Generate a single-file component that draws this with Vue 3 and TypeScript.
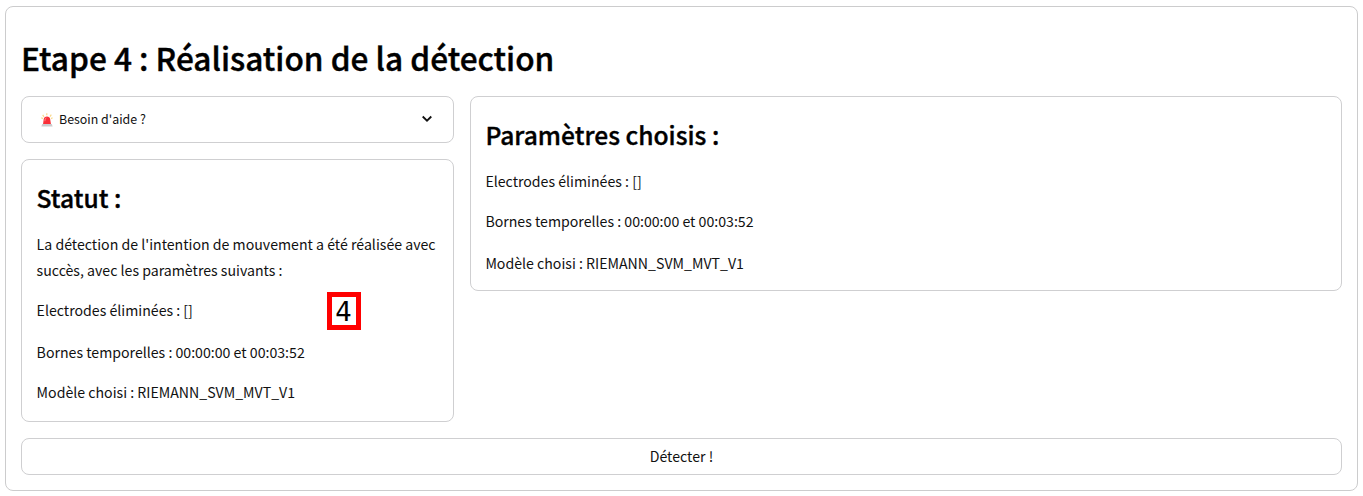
<script setup lang="ts">
const parameters: string[] = [
  'Electrodes éliminées : []',
  'Bornes temporelles : 00:00:00 et 00:03:52',
  'Modèle choisi : RIEMANN_SVM_MVT_V1',
]
</script>

<template>
  <main class="step">
    <h1>Etape 4 : Réalisation de la détection</h1>
    <div class="columns">
      <div class="left">
        <section class="card help">
          <svg class="siren" viewBox="0 0 12 14" aria-hidden="true">
            <path d="M1.7 1.8 3 3.8M5.8.2v2M10.3 1.7 9 3.6M.3 4.8l1.6.8M11.6 4.8l-1.6.8" stroke="#f9d98c" stroke-width="1.2" />
            <path d="M2 11.4 2.7 6.2C2.9 4.4 4.2 3.6 6 3.6s3 .8 3.2 2.6l.8 5.2z" fill="#f92f38" />
            <path d="M3.9 8.2 4.2 6c.1-.7.5-1 1.2-1.1" stroke="#ff8c88" stroke-width=".9" fill="none" />
            <path d="M1.2 11h9.6l.9 2.4H.3z" fill="#cbcbce" />
          </svg>
          <span>Besoin d'aide ?</span>
          <svg class="chevron" viewBox="0 0 12 8" aria-hidden="true">
            <path d="M1.7 1.5 6 5.7l4.3-4.2" fill="none" stroke="#111" stroke-width="1.8" />
          </svg>
        </section>
        <section class="card status">
          <h2>Statut :</h2>
          <p class="summary">La détection de l'intention de mouvement a été réalisée avec<br />succès, avec les paramètres suivants :</p>
          <p v-for="line in parameters" :key="line">{{ line }}</p>
          <span class="marker">4</span>
        </section>
      </div>
      <section class="card chosen">
        <h2>Paramètres choisis :</h2>
        <p v-for="line in parameters" :key="line">{{ line }}</p>
      </section>
    </div>
    <button type="button">Détecter !</button>
  </main>
</template>

<style>
body {
  background: #fff;
}
</style>

<style scoped>
* {
  box-sizing: border-box;
}
.step {
  width: 1353px;
  height: 485px;
  margin: 6px 0 0 5px;
  padding: 0 15px;
  border: 1px solid #cccccd;
  border-radius: 8px;
  color: #111;
  font-family: "Noto Sans CJK JP", "Noto Sans", sans-serif;
  font-size: 14.15px;
  display: flow-root;
}
h1 {
  margin: 27px 0 0;
  height: 62px;
  line-height: 46px;
  font-size: 31.6px;
  font-weight: 500;
  -webkit-text-stroke: 0.4px #000;
  color: #000;
  white-space: nowrap;
}
.columns {
  display: flex;
  align-items: flex-start;
  gap: 16px;
}
.left {
  width: 433px;
  flex: none;
}
.card {
  border: 1px solid #cfcfd1;
  border-radius: 8px;
}
.help {
  height: 47px;
  display: flex;
  align-items: center;
  padding: 0 20px 1px 19px;
  font-size: 12.4px;
}
.siren {
  width: 12px;
  height: 14px;
  margin: 1px 6px 0 0;
}
.chevron {
  width: 12px;
  height: 8px;
  margin-left: auto;
}
.status {
  position: relative;
  height: 263px;
  margin-top: 16px;
  padding: 18px 14.6px 0;
}
.chosen {
  flex: 1;
  height: 195px;
  margin-bottom: 1px;
  padding: 18px 14.4px 0;
}
h2 {
  margin: 0 0 15px;
  line-height: 38px;
  font-size: 24.6px;
  font-weight: 500;
  -webkit-text-stroke: 0.35px #000;
  color: #000;
}
p {
  margin: 0 0 15px;
  line-height: 26px;
  white-space: nowrap;
}
.summary {
  margin-bottom: 14px;
}
.summary + p {
  margin-bottom: 16px;
}
.status p:nth-of-type(3) {
  margin-bottom: 14px;
}
.chosen p:nth-of-type(1) {
  margin-bottom: 14px;
}
.chosen p:nth-of-type(2) {
  margin-bottom: 16px;
}
.marker {
  position: absolute;
  left: 305px;
  top: 132px;
  width: 34px;
  height: 38px;
  border: 5px solid #f00;
  background: #fff;
  color: #000;
  font: 26px/31px "DejaVu Sans", sans-serif;
  text-align: center;
  text-indent: -1px;
}
button {
  display: block;
  width: 100%;
  height: 37px;
  margin-top: 16px;
  padding: 0 0 2px;
  border: 1px solid #cfcfd1;
  border-radius: 8px;
  background: #fff;
  color: #111;
  font: inherit;
}
</style>
